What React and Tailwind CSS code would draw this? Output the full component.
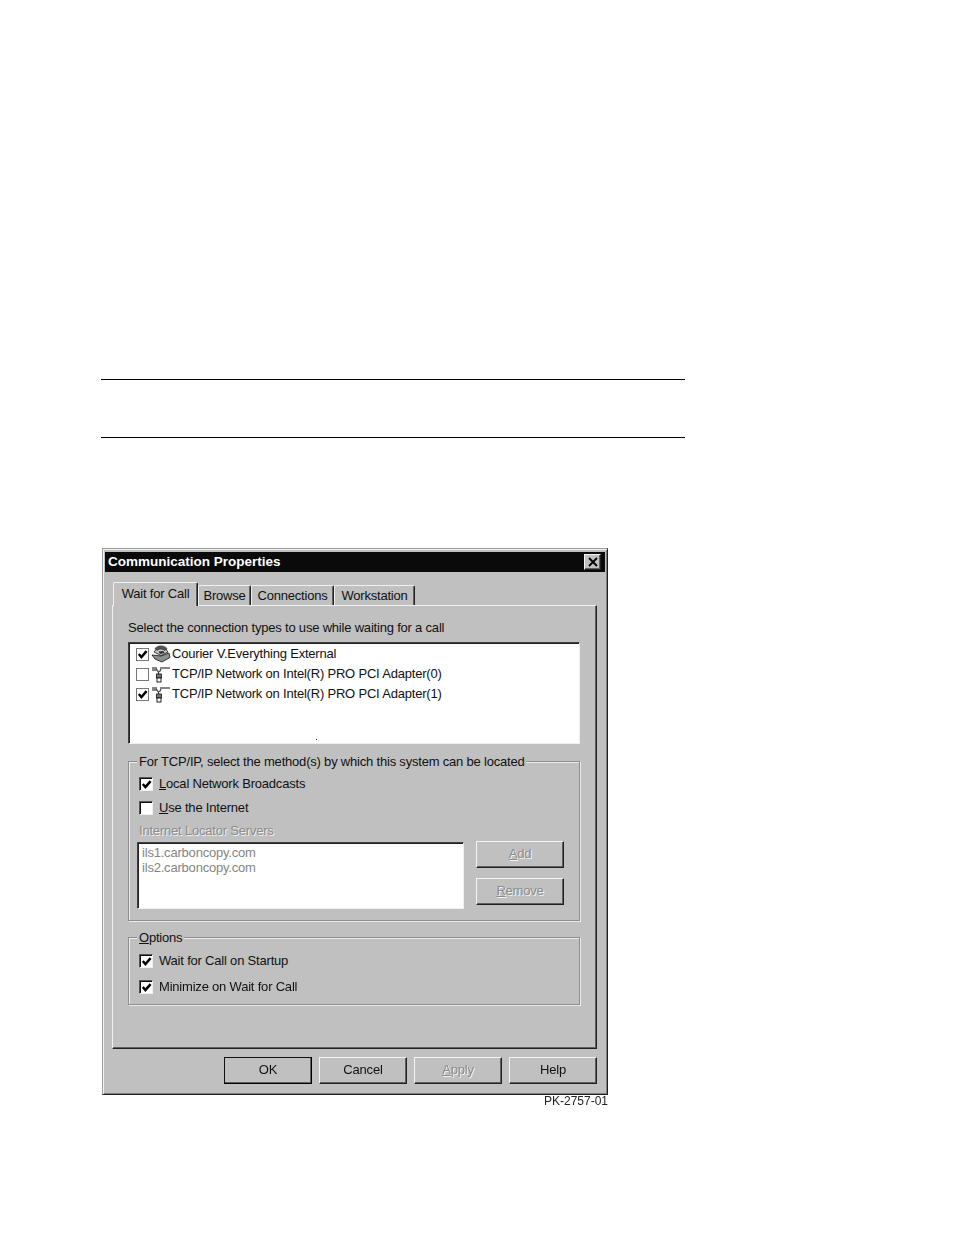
import React from "react";

const raised =
    "border border-t-[#f4f4f4] border-l-[#f4f4f4] border-r-[#202020] border-b-[#202020] shadow-[inset_-1px_-1px_0_#606060]";
const sunken =
    "border border-t-[#404040] border-l-[#404040] border-r-[#efefef] border-b-[#efefef] shadow-[inset_1px_1px_0_#222]";
const disabledText = "text-[#8c8c8c] [text-shadow:1px_1px_0_#f2f2f2]";
const groupBox =
    "border border-[#8e8e8e] shadow-[inset_1px_1px_0_#ececec,1px_1px_0_#ececec]";

function Check() {
    return (
        <svg viewBox="0 0 11 11" className="w-[11px] h-[11px]">
            <path d="M1.8 5 L4.4 8 L9.6 2.2" fill="none" stroke="#000" strokeWidth="2.5" />
        </svg>
    );
}

function CheckBox({ checked }) {
    return (
        <div className="w-[14px] h-[14px] flex items-center justify-center bg-white border border-t-[#555] border-l-[#555] border-r-[#f0f0f0] border-b-[#f0f0f0] shadow-[inset_1px_1px_0_#111] shrink-0">
            {checked && <Check />}
        </div>
    );
}

function ListCheck({ checked }) {
    return (
        <div className="w-[13px] h-[13px] flex items-center justify-center bg-white border border-[#777] shrink-0">
            {checked && <Check />}
        </div>
    );
}

function ModemIcon() {
    return (
        <svg viewBox="0 0 20 18" className="w-[20px] h-[18px] shrink-0">
            <path d="M1 10 L4 14 L11 17 L19 12.5 L18 8 L10 11 Z" fill="#8f8f8f" stroke="#111" strokeWidth="0.8" />
            <path d="M3 7 L10 10.5 L17 7 L14 3 L7 2 Z" fill="#c9c9c9" stroke="#111" strokeWidth="0.8" />
            <path d="M4 3.5 C7 0 13 0 16 3.5 L14 5.5 C11 3.5 8 3.5 6 5.5 Z" fill="#555" stroke="#111" strokeWidth="0.6" />
            <path d="M7.5 6.5 L12.5 6 L13.5 8 L9 9 Z" fill="#333" />
        </svg>
    );
}

function NetworkIcon() {
    return (
        <svg viewBox="0 0 20 17" className="w-[20px] h-[17px] shrink-0">
            <path d="M1 2 H6 M1 4 H5 M9 2 H19" fill="none" stroke="#111" strokeWidth="1.2" />
            <path d="M5 3 L7.5 6 V9 M10 3 L8.5 6" fill="none" stroke="#444" strokeWidth="1.2" />
            <rect x="5.5" y="8" width="5" height="4" fill="#777" stroke="#111" strokeWidth="0.8" />
            <rect x="6" y="12" width="4" height="4" fill="#fff" stroke="#111" strokeWidth="0.9" />
        </svg>
    );
}

function Tab({ label, active, className }) {
    return (
        <div
            className={`relative flex items-center justify-center border-t border-l border-r border-t-[#f0f0f0] border-l-[#f0f0f0] border-r-[#202020] rounded-t-[2px] shadow-[inset_-1px_0_0_#606060] ${className} ${
                active ? "h-[24px] z-10 -mb-px bg-[#c0c0c0]" : "h-[20px]"
            }`}
        >
            {label}
        </div>
    );
}

function Button({ children, disabled, className = "" }) {
    return (
        <div
            className={`flex items-center justify-center h-[27px] w-[88px] pb-[1px] ${raised} ${
                disabled ? disabledText : ""
            } ${className}`}
        >
            {children}
        </div>
    );
}

function ListRow({ checked, icon, label }) {
    return (
        <div className="flex items-center h-[20px]">
            <ListCheck checked={checked} />
            <div className="ml-[2px] mr-[1px]">{icon}</div>
            <span>{label}</span>
        </div>
    );
}

function OptionRow({ checked, children, className = "" }) {
    return (
        <div className={`flex items-center gap-[6px] h-[16px] ${className}`}>
            <CheckBox checked={checked} />
            <span>{children}</span>
        </div>
    );
}

export default function App() {
    return (
        <div className="w-[954px] h-[1235px] bg-white pt-[379px] pl-[101px] font-['Liberation_Sans',Arial,sans-serif] text-[13px] tracking-[-0.2px] leading-[16px] text-[#111] overflow-hidden">
            <div className="w-[584px] h-[1px] bg-black" />
            <div className="w-[584px] h-[1px] bg-black mt-[57px]" />

            <div className="w-[506px] ml-[1px] mt-[110px] blur-[0.4px]">
                <div className="w-[506px] h-[547px] bg-[#c0c0c0] border border-t-[#9c9c9c] border-l-[#9c9c9c] border-r-[#202020] border-b-[#202020] shadow-[inset_1px_1px_0_#f2f2f2,inset_-1px_-1px_0_#808080] pt-[3px] px-[2px]">
                    {/* Title bar */}
                    <div className="h-[20px] bg-[#0a0a0a] flex items-center justify-between pl-[3px] pr-[4px] text-white font-bold text-[13.5px] tracking-normal">
                        <span>Communication Properties</span>
                        <div className={`w-[17px] h-[16px] bg-[#c0c0c0] flex items-center justify-center ${raised}`}>
                            <svg viewBox="0 0 10 10" className="w-[10px] h-[10px]">
                                <path d="M1 1 L9 9 M9 1 L1 9" stroke="#000" strokeWidth="1.8" />
                            </svg>
                        </div>
                    </div>

                    {/* Tabs */}
                    <div className="flex items-end h-[23px] ml-[8px] mt-[10px]">
                        <Tab label="Wait for Call" active className="w-[85px] pb-[2px]" />
                        <Tab label="Browse" className="w-[53px]" />
                        <Tab label="Connections" className="w-[83px]" />
                        <Tab label="Workstation" className="w-[81px]" />
                    </div>

                    {/* Panel */}
                    <div className="ml-[7px] w-[485px] h-[444px] border border-t-[#f0f0f0] border-l-[#f0f0f0] border-r-[#202020] border-b-[#202020] shadow-[inset_-1px_-1px_0_#606060] pt-[14px] pl-[15px]">
                        <div className="h-[16px]">Select the connection types to use while waiting for a call</div>

                        <div className={`relative w-[452px] h-[102px] mt-[6px] bg-white pl-[7px] pt-[1px] ${sunken}`}>
                            <ListRow checked icon={<ModemIcon />} label="Courier V.Everything External" />
                            <ListRow icon={<NetworkIcon />} label="TCP/IP Network on Intel(R) PRO PCI Adapter(0)" />
                            <ListRow checked icon={<NetworkIcon />} label="TCP/IP Network on Intel(R) PRO PCI Adapter(1)" />
                            <div className="absolute left-[187px] bottom-[3px] w-px h-px bg-[#333]" />
                        </div>

                        <fieldset className={`w-[452px] h-[168px] mt-[9px] pl-[10px] ${groupBox}`}>
                            <legend className="-ml-[2px] px-[2px] pt-[1px] h-[16px] bg-[#c0c0c0] whitespace-nowrap">
                                For TCP/IP, select the method(s) by which this system can be located
                            </legend>
                            <OptionRow checked className="mt-[7px]">
                                <u>L</u>ocal Network Broadcasts
                            </OptionRow>
                            <OptionRow className="mt-[8px]">
                                <u>U</u>se the Internet
                            </OptionRow>
                            <div className={`mt-[7px] h-[15px] ${disabledText}`}>Internet Locator Servers</div>
                            <div className="flex mt-[4px] -ml-[2px]">
                                <div className={`w-[327px] h-[67px] bg-white pl-[4px] pt-[2px] text-[#858585] ${sunken}`}>
                                    <div className="h-[15px]">ils1.carboncopy.com</div>
                                    <div className="h-[15px]">ils2.carboncopy.com</div>
                                </div>
                                <div className="ml-[12px] flex flex-col gap-[10px] -mt-[1px]">
                                    <Button disabled><span><u>A</u>dd</span></Button>
                                    <Button disabled><span><u>R</u>emove</span></Button>
                                </div>
                            </div>
                        </fieldset>

                        <fieldset className={`w-[452px] h-[76px] mt-[8px] pl-[10px] ${groupBox}`}>
                            <legend className="-ml-[2px] px-[2px] pt-[1px] h-[16px] bg-[#c0c0c0]">
                                <u>O</u>ptions
                            </legend>
                            <OptionRow checked className="mt-[8px]">Wait for Call on Startup</OptionRow>
                            <OptionRow checked className="mt-[10px]">Minimize on Wait for Call</OptionRow>
                        </fieldset>
                    </div>

                    {/* Footer buttons */}
                    <div className="flex justify-end gap-[7px] mt-[8px] pr-[8px]">
                        <Button className="!border-[#111] !border-b-[#000] !border-r-[#000] shadow-[inset_-1px_-1px_0_#303030,inset_1px_1px_0_#f4f4f4]">OK</Button>
                        <Button>Cancel</Button>
                        <Button disabled><span><u>A</u>pply</span></Button>
                        <Button>Help</Button>
                    </div>
                </div>
                <div className="text-right text-[12px] tracking-normal leading-[13px] text-[#222]">PK-2757-01</div>
            </div>
        </div>
    );
}
